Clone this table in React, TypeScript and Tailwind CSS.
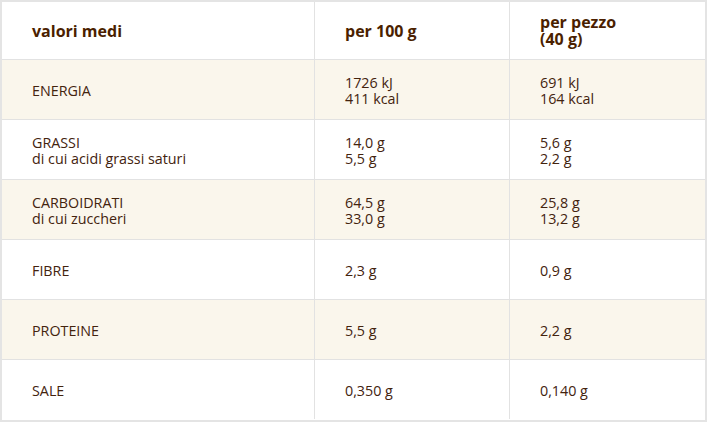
import React from "react";

const rows: { label: string[]; a: string[]; b: string[]; shaded: boolean }[] = [
  { label: ["ENERGIA"], a: ["1726 kJ", "411 kcal"], b: ["691 kJ", "164 kcal"], shaded: true },
  { label: ["GRASSI", "di cui acidi grassi saturi"], a: ["14,0 g", "5,5 g"], b: ["5,6 g", "2,2 g"], shaded: false },
  { label: ["CARBOIDRATI", "di cui zuccheri"], a: ["64,5 g", "33,0 g"], b: ["25,8 g", "13,2 g"], shaded: true },
  { label: ["FIBRE"], a: ["2,3 g"], b: ["0,9 g"], shaded: false },
  { label: ["PROTEINE"], a: ["5,5 g"], b: ["2,2 g"], shaded: true },
  { label: ["SALE"], a: ["0,350 g"], b: ["0,140 g"], shaded: false },
];

function Cell({ lines, border }: { lines: string[]; border?: boolean }) {
  return (
    <div className={`flex flex-col justify-center pl-[30px] pt-[2px] ${border ? "border-r border-[#e2e2e2]" : ""}`}>
      {lines.map((l, i) => (
        <div key={i} className="leading-[16px]">{l}</div>
      ))}
    </div>
  );
}

export default function App() {
  return (
    <div
      className="w-[707px] h-[422px] bg-white border-2 border-[#e4e4e4]"
      style={{ fontFamily: '"Open Sans", "Liberation Sans", sans-serif' }}
    >
      <div className="grid grid-cols-[313px_195px_1fr] h-[58px] border-b border-[#e2e2e2] font-bold text-[16px] text-[#4b1f00]">
        <div className="flex flex-col justify-center pl-[30px] border-r border-[#e2e2e2]">valori medi</div>
        <div className="flex flex-col justify-center pl-[30px] border-r border-[#e2e2e2]">per 100 g</div>
        <div className="flex flex-col justify-center pl-[30px] leading-[17px]">
          <div>per pezzo</div>
          <div>(40 g)</div>
        </div>
      </div>
      {rows.map((r, i) => (
        <div
          key={i}
          className={`grid grid-cols-[313px_195px_1fr] ${i < rows.length - 1 ? "h-[60px] border-b" : "h-[59px]"} border-[#e2e2e2] ${r.shaded ? "bg-[#faf6ec]" : "bg-white"} text-[14.3px] font-[380] text-[#43230e]`}
        >
          <Cell lines={r.label} border />
          <Cell lines={r.a} border />
          <Cell lines={r.b} />
        </div>
      ))}
    </div>
  );
}
